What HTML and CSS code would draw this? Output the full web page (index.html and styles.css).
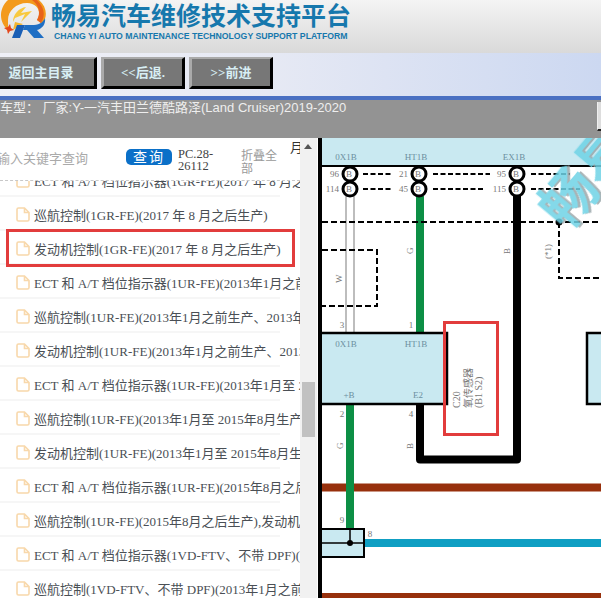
FILE: index.html
```html
<!DOCTYPE html>
<html lang="zh-CN">
<head>
    <meta charset="UTF-8">
    <meta name="viewport" content="width=device-width, initial-scale=1.0">
    <title>畅易汽车维修技术支持平台</title>
    <link rel="stylesheet" href="styles.css">
</head>
<body>
    <svg width="0" height="0" class="defs">
        <symbol id="doc" viewBox="0 0 14 15">
            <path d="M1 2.500 Q1 1 2.500 1 H8.500 L13 5.500 V12.500 Q13 14 11.500 14 H2.500 Q1 14 1 12.500 Z M8.500 1 V5.500 H13" fill="none" stroke="#f8d8ab" stroke-width="1.600"/>
        </symbol>
    </svg>
    <div class="page">
        <header class="top-header">
            <svg class="logo" width="46" height="40" viewBox="0 0 46 40">
                <path d="M8 31 C-3 22 -2 8 7 0 L38 0 C46 7 47 17 41 24 L36 20 C41 13 37 3 26 3 C15 3 7 11 7 20 C7 24 7 28 8 31 Z" fill="#f39a1c"/>
                <path d="M36 0 C43 7 45 15 40 23 L36 20 C40 13 38 5 31 0 Z" fill="#e8641b"/>
                <path d="M12 22 C12 14 18 8 25 7 L20 13 L31 11 L20 22 L24 14 L14 18 Z" fill="#f8c93f"/>
                <path d="M14 22 L22 24 L12 30 Z" fill="#f4b52f"/>
                <path d="M3 28 L7 27 L9 24 L10 28 L13 30 L9 31 L7 34 L6 30 Z" fill="#e4481c"/>
                <path d="M16 25 H24 L19 38 H11 Z" fill="#1a5fb5"/>
                <path d="M24 25 H33 C39 25 43 21 44 18 C45 24 41 29 36 30 L43 38 H33 L26 30 H22 Z" fill="#1f6fc4"/>
            </svg>
            <div class="brand">
                <div class="brand-name">畅易汽车维修技术支持平台</div>
                <div class="brand-sub">CHANG YI AUTO MAINTENANCE TECHNOLOGY SUPPORT PLATFORM</div>
            </div>
        </header>

        <nav class="nav-bar">
            <a class="nav-btn nav-btn-first">返回主目录</a>
            <a class="nav-btn">&lt;&lt;后退.</a>
            <a class="nav-btn">&gt;&gt;前进</a>
        </nav>

        <div class="info-bar">
            <span class="car-type">车型： 厂家:Y-一汽丰田兰德酷路泽(Land Cruiser)2019-2020</span>
            <span class="info-btn"></span>
        </div>

        <main class="main">
            <aside class="side">
                <div class="toolbar">
                    <span class="search-hint">输入关键字查询</span>
                    <span class="search-btn">查询</span>
                    <span class="part-no">PC.28-<br>26112</span>
                    <span class="collapse">折叠全部</span>
                    <span class="cut-text">月</span>
                </div>
                <ul class="doc-list">
                    <li><svg class="doc-icon"><use href="#doc"/></svg>ECT 和 A/T 档位指示器(1GR-FE)(2017 年 8 月之后生产)</li>
                    <li><svg class="doc-icon"><use href="#doc"/></svg>巡航控制(1GR-FE)(2017 年 8 月之后生产)</li>
                    <li><svg class="doc-icon"><use href="#doc"/></svg>发动机控制(1GR-FE)(2017 年 8 月之后生产)</li>
                    <li><svg class="doc-icon"><use href="#doc"/></svg>ECT 和 A/T 档位指示器(1UR-FE)(2013年1月之前生产)</li>
                    <li><svg class="doc-icon"><use href="#doc"/></svg>巡航控制(1UR-FE)(2013年1月之前生产、2013年1月</li>
                    <li><svg class="doc-icon"><use href="#doc"/></svg>发动机控制(1UR-FE)(2013年1月之前生产、2013年1月</li>
                    <li><svg class="doc-icon"><use href="#doc"/></svg>ECT 和 A/T 档位指示器(1UR-FE)(2013年1月至 2015年</li>
                    <li><svg class="doc-icon"><use href="#doc"/></svg>巡航控制(1UR-FE)(2013年1月至 2015年8月生产)</li>
                    <li><svg class="doc-icon"><use href="#doc"/></svg>发动机控制(1UR-FE)(2013年1月至 2015年8月生产)</li>
                    <li><svg class="doc-icon"><use href="#doc"/></svg>ECT 和 A/T 档位指示器(1UR-FE)(2015年8月之后生产)</li>
                    <li><svg class="doc-icon"><use href="#doc"/></svg>巡航控制(1UR-FE)(2015年8月之后生产),发动机控制</li>
                    <li><svg class="doc-icon"><use href="#doc"/></svg>ECT 和 A/T 档位指示器(1VD-FTV、不带 DPF)(2013年</li>
                    <li><svg class="doc-icon"><use href="#doc"/></svg>巡航控制(1VD-FTV、不带 DPF)(2013年1月之前生产)</li>
                </ul>
                <div class="scroll-track">
                    <span class="scroll-up"></span>
                    <span class="scroll-thumb"></span>
                </div>
                <div class="mark mark-row"></div>
            </aside>

            <section class="diagram">
                <svg width="279" height="460" viewBox="322 138 279 460">
                    <rect x="322" y="138" width="279" height="28" fill="#c9e9f1"/>

                    <!-- wires -->
                    <path d="M346 196V333M354 196V333" class="wire-grey"/>
                    <path d="M420 196V333" class="wire-green"/>
                    <path d="M322 487.500H601" class="wire-brown"/>
                    <path d="M322 597H601" class="wire-brown"/>
                    <path d="M350 404V530" class="wire-green"/>
                    <path d="M420 404V459.500H517V196" class="wire-black"/>
                    <path d="M364 543H601" class="wire-blue"/>

                    <!-- dashed lines -->
                    <path d="M322 222H601M559 222V278H601M322 250H377V306H322" class="dash"/>
                    <path d="M363 174H392M363 189H392M433 174H490M433 189H483M531 174H570M531 189H580" class="dash dash-short"/>
                    <circle cx="559" cy="222" r="3.500"/>

                    <!-- connectors -->
                    <rect x="322" y="165" width="279" height="2"/>
                    <g class="pin">
                        <circle cx="350" cy="174" r="7"/><circle cx="350" cy="189" r="7"/>
                        <circle cx="419" cy="174" r="7"/><circle cx="419" cy="189" r="7"/>
                        <circle cx="517" cy="174" r="7"/><circle cx="517" cy="189" r="7"/>
                    </g>
                    <g class="label">
                        <text x="349" y="177" text-anchor="middle">B</text>
                        <text x="349" y="192" text-anchor="middle">B</text>
                        <text x="418" y="177" text-anchor="middle">B</text>
                        <text x="418" y="192" text-anchor="middle">B</text>
                        <text x="516" y="177" text-anchor="middle">B</text>
                        <text x="516" y="192" text-anchor="middle">B</text>
                        <text x="339" y="177" text-anchor="end">96</text>
                        <text x="339" y="192" text-anchor="end">114</text>
                        <text x="408" y="177" text-anchor="end">21</text>
                        <text x="408" y="192" text-anchor="end">45</text>
                        <text x="506" y="177" text-anchor="end">95</text>
                        <text x="506" y="192" text-anchor="end">115</text>
                        <text x="342" y="328" text-anchor="middle">3</text>
                        <text x="411" y="328" text-anchor="middle">1</text>
                        <text x="342" y="417" text-anchor="middle">2</text>
                        <text x="411" y="417" text-anchor="middle">4</text>
                        <text x="342" y="523" text-anchor="middle">9</text>
                        <text x="370" y="537" text-anchor="middle">8</text>
                        <text transform="translate(413 254) rotate(-90)">G</text>
                        <text transform="translate(510 254) rotate(-90)">B</text>
                        <text transform="translate(342 283) rotate(-90)">W</text>
                        <text transform="translate(343 449) rotate(-90)">G</text>
                        <text transform="translate(413 449) rotate(-90)">B</text>
                        <text transform="translate(551 259) rotate(-90)">(*1)</text>
                    </g>
                    <rect class="ecu" x="316" y="333" width="131" height="71"/>
                    <rect class="ecu" x="587" y="333" width="20" height="71"/>
                    <rect class="ecu ecu-thin" x="316" y="529" width="48" height="28"/>
                    <path d="M316 543H364M350 529V543" class="thin"/>
                    <circle cx="350" cy="543" r="3"/>
                    <g class="label label-blue">
                        <text x="346" y="160" text-anchor="middle">0X1B</text>
                        <text x="416" y="160" text-anchor="middle">HT1B</text>
                        <text x="514" y="160" text-anchor="middle">EX1B</text>
                        <text x="346" y="347" text-anchor="middle">0X1B</text>
                        <text x="416" y="347" text-anchor="middle">HT1B</text>
                        <text x="349" y="398" text-anchor="middle">+B</text>
                        <text x="418" y="398" text-anchor="middle">E2</text>
                    </g>
                    <g class="label label-big">
                        <text transform="translate(460 408) rotate(-90)">C20</text>
                        <text transform="translate(472 408) rotate(-90)">氧传感器</text>
                        <text transform="translate(482 408) rotate(-90)">(B1 S2)</text>
                    </g>
                    <text class="wm" transform="translate(566 232) rotate(-50)">畅易</text>
                </svg>
            </section>
        </main>

        <div class="mark mark-sensor"></div>
    </div>
</body>
</html>
```
FILE: styles.css
```css
body {
    margin: 0;
    font-family: "Liberation Serif", "Noto Sans CJK SC", serif;
    color: #444;
}

.defs {
    position: absolute;
}

.page {
    position: relative;
    width: 601px;
    height: 598px;
    overflow: hidden;
    background: white;
}

.top-header {
    display: flex;
    height: 53px;
    overflow: hidden;
    background: linear-gradient(to bottom, #f4f4f4, #d9d9d9);
}

.logo {
    flex: none;
    margin-left: 1px;
}

.brand {
    margin-left: 4px;
}

.brand-name {
    margin-top: -2px;
    font-family: "Noto Sans CJK SC", sans-serif;
    font-size: 25px;
    line-height: 32px;
    font-weight: bold;
    color: #1678ad;
    white-space: nowrap;
}

.brand-sub {
    margin: 0 0 0 3px;
    font-family: "Liberation Sans", sans-serif;
    font-size: 8.700px;
    line-height: 12px;
    font-weight: bold;
    color: #1678ad;
    white-space: nowrap;
}

.nav-bar {
    display: flex;
    gap: 4px;
    height: 43px;
    padding-top: 4px;
    box-sizing: border-box;
    background: linear-gradient(to right, #eff0f7, #e6e9f4 45%, #ccd8f1);
}

.nav-btn {
    display: block;
    width: 84px;
    height: 32px;
    box-sizing: border-box;
    background: #777;
    border-top: 2px solid #aaa;
    border-left: 3px solid #aaa;
    border-right: 3px solid #000;
    border-bottom: 3px solid #000;
    font-family: "Liberation Serif", "Noto Sans CJK SC", sans-serif;
    font-size: 13px;
    line-height: 27px;
    font-weight: bold;
    text-align: center;
    color: #d8eef4;
}

.nav-btn-first {
    width: 97px;
    padding-right: 12px;
    border-left: none;
}

.info-bar {
    position: relative;
    height: 42px;
    box-sizing: border-box;
    border-top: 4px solid #4a70c2;
    background: #939393;
    color: #eee;
    font-size: 13px;
    line-height: 16px;
}

.car-type {
    display: block;
    font-family: "Liberation Sans", "Noto Sans CJK SC", sans-serif;
    white-space: nowrap;
}

.info-btn {
    position: absolute;
    top: 2px;
    right: 0;
    width: 3px;
    height: 27px;
    background: #ddd;
    border-left: 1px solid #eee;
    border-bottom: 2px solid #222;
}

.main {
    display: flex;
    height: 460px;
}

.side {
    position: relative;
    flex: none;
    width: 318px;
    height: 460px;
    overflow: hidden;
    border-right: 4px solid #000;
}

.toolbar {
    position: relative;
    z-index: 1;
    display: flex;
    align-items: flex-start;
    width: 300px;
    height: 43px;
    box-sizing: border-box;
    border-bottom: 1px dashed #c8c8c8;
    background: white;
}

.search-hint {
    flex: none;
    width: 126px;
    margin-left: -3px;
    margin-right: 3px;
    margin-top: 12px;
    font-family: "Noto Sans CJK SC", sans-serif;
    font-size: 13px;
    line-height: 16px;
    color: #aaa;
    white-space: nowrap;
}

.search-btn {
    flex: none;
    width: 46px;
    height: 16px;
    margin-top: 11px;
    border-radius: 5px;
    background: #0b70c8;
    color: white;
    font-family: "Noto Sans CJK SC", sans-serif;
    font-size: 14px;
    line-height: 15px;
    letter-spacing: 2px;
    text-align: center;
}

.part-no {
    flex: none;
    width: 63px;
    margin-left: 6px;
    margin-top: 10px;
    font-size: 12.500px;
    line-height: 12px;
}

.collapse {
    flex: none;
    width: 37px;
    margin-top: 10px;
    font-family: "Noto Sans CJK SC", sans-serif;
    font-size: 12px;
    line-height: 13px;
    color: #999;
}

.cut-text {
    flex: none;
    margin-left: 12px;
    font-family: "Noto Sans CJK SC", sans-serif;
    font-size: 13px;
    line-height: 18px;
    color: #333;
}

.doc-list {
    width: 300px;
    margin: -18px 0 0;
    padding: 0;
    list-style: none;
    overflow: hidden;
}

.doc-list li {
    display: flex;
    align-items: center;
    height: 34px;
    box-sizing: border-box;
    padding-left: 16px;
    font-size: 13px;
    white-space: nowrap;
    color: #4a4f55;
    background: linear-gradient(#f6f6f6, #f6f6f6) no-repeat left bottom / 280px 2px;
}

.doc-icon {
    flex: none;
    width: 14px;
    height: 15px;
    margin-right: 4px;
}

.scroll-track {
    position: absolute;
    top: 0;
    left: 300px;
    width: 17px;
    height: 460px;
    background: #f1f1f1;
    z-index: 2;
}

.scroll-up {
    position: absolute;
    top: 6px;
    left: 4px;
    border-left: 4px solid transparent;
    border-right: 4px solid transparent;
    border-bottom: 5px solid #555;
}

.scroll-thumb {
    position: absolute;
    top: 244px;
    left: 2px;
    width: 13px;
    height: 55px;
    background: #c1c1c1;
}

.diagram {
    flex: 1;
    overflow: hidden;
}

.diagram svg {
    display: block;
}

.wire-grey { fill: none; stroke: #bdbdbd; stroke-width: 2; }
.wire-green { fill: none; stroke: #0d8f45; stroke-width: 8; }
.wire-brown { fill: none; stroke: #97300c; stroke-width: 8; }
.wire-blue { fill: none; stroke: #0f9fc3; stroke-width: 8; }
.wire-black { fill: none; stroke: #000; stroke-width: 8; stroke-linejoin: round; }

.dash { fill: none; stroke: #000; stroke-width: 2; stroke-dasharray: 6 3; }
.dash-short { stroke-dasharray: 5 2.500; }

.pin circle { fill: white; stroke: #000; stroke-width: 3; }

.label {
    font-family: "Liberation Serif", "Noto Sans CJK SC", serif;
    font-size: 9px;
    fill: #777;
}

.label-blue {
    fill: #6b8fa0;
}

.label-big {
    font-size: 10px;
}

.ecu { fill: #c9e9f1; stroke: #000; stroke-width: 2.500; }
.ecu-thin { stroke-width: 2; }
.thin { fill: none; stroke: #000; stroke-width: 1.500; }

.wm {
    font-family: "Noto Sans CJK SC", sans-serif;
    font-size: 56px;
    font-weight: bold;
    fill: #6fd3e6;
    opacity: 0.85;
    filter: drop-shadow(2px 2px 0 #9aa7aa);
}

.mark {
    position: absolute;
    box-sizing: border-box;
    border: 3px solid #e23c3c;
}

.mark-row {
    top: 91px;
    left: 6px;
    width: 289px;
    height: 38px;
    z-index: 3;
}

.mark-sensor {
    top: 321px;
    left: 443px;
    width: 56px;
    height: 115px;
}
```
